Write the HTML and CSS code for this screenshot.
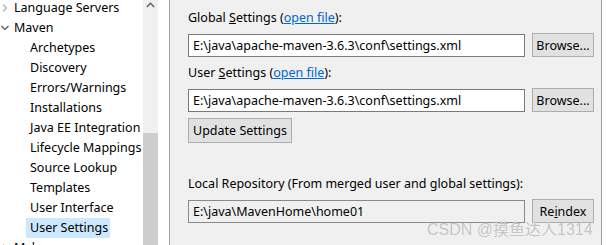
FILE: index.html
```html
<!DOCTYPE html>
<html lang="en">
<head>
    <meta charset="UTF-8">
    <title>Maven User Settings</title>
    <link rel="stylesheet" href="styles.css">
</head>
<body>
    <div class="window">
        <div class="tree">
            <ul class="tree-list">
                <li class="node">
                    <svg class="twisty" width="8" height="8" viewBox="0 0 8 8"><path d="M2 0.5 L5.5 4 L2 7.5" fill="none" stroke="#b0b0b0" stroke-width="1.2"/></svg>
                    Language Servers
                </li>
                <li class="node">
                    <svg class="twisty" width="8" height="8" viewBox="0 0 8 8"><path d="M0.5 2 L4 5.5 L7.5 2" fill="none" stroke="#555" stroke-width="1.2"/></svg>
                    Maven
                </li>
                <li class="leaf">Archetypes</li>
                <li class="leaf">Discovery</li>
                <li class="leaf">Errors/Warnings</li>
                <li class="leaf">Installations</li>
                <li class="leaf">Java EE Integration</li>
                <li class="leaf">Lifecycle Mappings</li>
                <li class="leaf">Source Lookup</li>
                <li class="leaf">Templates</li>
                <li class="leaf">User Interface</li>
                <li class="leaf"><span class="selected">User Settings</span></li>
                <li class="node">
                    <svg class="twisty" width="8" height="8" viewBox="0 0 8 8"><path d="M2 0.5 L5.5 4 L2 7.5" fill="none" stroke="#b0b0b0" stroke-width="1.2"/></svg>
                    Mylyn
                </li>
            </ul>
        </div>
        <div class="scrollbar">
            <div class="scroll-up">
                <svg width="9" height="6" viewBox="0 0 9 6"><path d="M0.8 5 L4.5 1.3 L8.2 5" fill="none" stroke="#606060" stroke-width="1.5"/></svg>
            </div>
            <div class="scroll-track"></div>
            <div class="scroll-thumb"></div>
        </div>
        <div class="gutter"></div>

        <div class="settings">
            <div class="label">Global <u>S</u>ettings (<a href="#">open file</a>):</div>
            <div class="field-row">
                <div class="field">E:\java\apache-maven-3.6.3\conf\settings.xml</div>
                <button class="btn">Browse...</button>
            </div>

            <div class="label">User <u>S</u>ettings (<a href="#">open file</a>):</div>
            <div class="field-row">
                <div class="field">E:\java\apache-maven-3.6.3\conf\settings.xml</div>
                <button class="btn">Browse...</button>
            </div>

            <button class="btn btn-update">Update Settings</button>

            <div class="label label-local">Local Repository (From merged user and global settings):</div>
            <div class="field-row">
                <div class="field field-disabled">E:\java\MavenHome\home01</div>
                <button class="btn">Re<u>i</u>ndex</button>
            </div>

            <div class="watermark">CSDN @摸鱼达人1314</div>
        </div>
        <div class="edge"></div>
    </div>
</body>
</html>
```

FILE: styles.css
```css
body {
    margin: 0;
    font-family: "Noto Sans", "Noto Sans CJK SC", sans-serif;
    font-size: 12.5px;
    color: #000;
    background-color: #fff;
    overflow: hidden;
}

.window {
    display: flex;
    width: 606px;
    height: 245px;
    overflow: hidden;
}

/* Preference tree */
.tree {
    width: 143px;
    background-color: #fff;
    overflow: hidden;
}

.tree-list {
    list-style: none;
    margin: -2px 0 0 0;
    padding: 0;
}

.tree-list li {
    height: 20px;
    line-height: 20px;
    white-space: nowrap;
}

.node {
    display: flex;
    align-items: center;
    padding-left: 1px;
}

.twisty {
    margin-right: 5px;
}

.leaf {
    padding-left: 30px;
}

.selected {
    display: inline-block;
    width: 80px;
    margin-left: -4px;
    padding-left: 4px;
    background-color: #cce8ff;
}

/* Scrollbar */
.scrollbar {
    width: 15px;
    background-color: #f0f0f0;
    display: flex;
    flex-direction: column;
}

.scroll-up {
    height: 17px;
    display: flex;
    justify-content: center;
    align-items: center;
    margin-top: -4px;
}

.scroll-track {
    height: 120px;
}

.scroll-thumb {
    flex: 1;
    background-color: #cdcdcd;
}

.gutter {
    width: 11px;
    background-color: #fff;
    border-right: 1px solid #a0a0a0;
}

/* Settings page */
.settings {
    position: relative;
    width: 413px;
    padding-left: 18px;
    background-color: #f0f0f0;
}

.label {
    height: 16px;
    line-height: 16px;
    margin-top: 10px;
    white-space: nowrap;
}

.label a {
    color: #0066cc;
}

.label + .field-row {
    margin-top: 7px;
}

.field-row + .label {
    margin-top: 8px;
}

.field-row {
    display: flex;
    align-items: center;
    gap: 7px;
}

.field {
    box-sizing: border-box;
    width: 337px;
    height: 23px;
    line-height: 21px;
    padding-left: 4px;
    border: 1px solid #7a7a7a;
    background-color: #fff;
    white-space: nowrap;
    overflow: hidden;
}

.field-disabled {
    background-color: #f0f0f0;
    border-color: #8a8a8a;
}

.btn {
    box-sizing: border-box;
    width: 62px;
    height: 24px;
    padding: 0;
    font-family: inherit;
    font-size: 12.5px;
    color: #000;
    background-color: #e1e1e1;
    border: 1px solid #adadad;
}

.btn-update {
    display: block;
    width: 104px;
    height: 25px;
    margin-top: 6px;
}

.label-local {
    margin-top: 33px;
}

.label-local + .field-row {
    margin-top: 7px;
}

.watermark {
    position: absolute;
    left: 257px;
    top: 216px;
    font-family: "Liberation Sans", "Noto Sans CJK SC", sans-serif;
    font-size: 16px;
    color: #c4c4c4;
    text-shadow: 0 0 1px #fff;
    white-space: nowrap;
}

.edge {
    width: 1px;
    background-color: #a0a0a0;
}
```
